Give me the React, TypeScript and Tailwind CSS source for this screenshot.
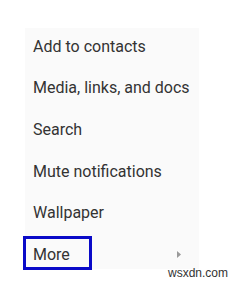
import React from 'react';

const items = ['Add to contacts', 'Media, links, and docs', 'Search', 'Mute notifications', 'Wallpaper', 'More'];

export default function App() {
  return (
    <div className="relative w-[240px] h-[284px] bg-white overflow-hidden" style={{ fontFamily: 'Roboto, sans-serif' }}>
      <div className="absolute left-[25px] top-[28px] w-[174px] h-[241px] bg-[#fafafa] overflow-hidden">
        <ul className="-mt-[2px]">
          {items.map((label, i) => (
            <li key={label} className="h-[41.6px] flex items-center justify-between pl-[8px] pr-[18px] text-[16px] text-[#333] whitespace-nowrap">
              <span>{label}</span>
              {i === items.length - 1 && (
                <svg width="4" height="7" viewBox="0 0 4 7">
                  <path d="M0 0 L4 3.5 L0 7 Z" fill="#9a9a9a" />
                </svg>
              )}
            </li>
          ))}
        </ul>
      </div>
      <div className="absolute left-[23px] top-[236px] w-[69px] h-[34px] border-[3px] border-[#0a0ac8]" />
      <div className="absolute left-[168px] top-[264px] text-[12px] text-[#333]" style={{ fontFamily: '"Liberation Sans", Arial, sans-serif' }}>
        wsxdn.com
      </div>
    </div>
  );
}
